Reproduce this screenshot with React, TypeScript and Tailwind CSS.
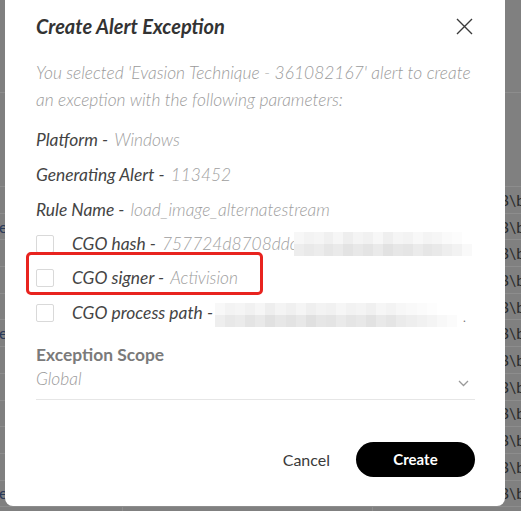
import React from "react";

const leftTexts: Record<number, string> = { 1: "e", 5: "e:", 11: "e:", 12: "exe" };

const hashBlocks = [
  ["bg-[#f7f7f7]", "bg-[#f3f3f3]", "bg-[#f5f5f5]", "bg-[#f0f0f0]", "bg-[#f6f6f6]", "bg-[#eeeeee]", "bg-[#f4f4f4]", "bg-[#f1f1f1]", "bg-[#f7f7f7]", "bg-[#efefef]", "bg-[#f5f5f5]", "bg-[#f3f3f3]", "bg-[#f8f8f8]", "bg-[#f4f4f4]", "bg-[#f6f6f6]", "bg-[#fafafa]", "bg-[#fcfcfc]", "bg-[#ffffff]"],
  ["bg-[#ededed]", "bg-[#e9e9e9]", "bg-[#ececec]", "bg-[#e6e6e6]", "bg-[#eaeaea]", "bg-[#e3e3e3]", "bg-[#e8e8e8]", "bg-[#e4e4e4]", "bg-[#eaeaea]", "bg-[#e2e2e2]", "bg-[#e7e7e7]", "bg-[#e5e5e5]", "bg-[#ebebeb]", "bg-[#e6e6e6]", "bg-[#e9e9e9]", "bg-[#eeeeee]", "bg-[#f2f2f2]", "bg-[#f9f9f9]"],
];

const pathBlocks = [
  ["bg-[#f8f8f8]", "bg-[#f3f3f3]", "bg-[#f5f5f5]", "bg-[#f1f1f1]", "bg-[#f6f6f6]", "bg-[#eeeeee]", "bg-[#f4f4f4]", "bg-[#f0f0f0]", "bg-[#f5f5f5]", "bg-[#efefef]", "bg-[#f3f3f3]", "bg-[#f1f1f1]", "bg-[#f6f6f6]", "bg-[#f2f2f2]", "bg-[#f4f4f4]", "bg-[#f0f0f0]", "bg-[#f6f6f6]", "bg-[#f3f3f3]", "bg-[#f7f7f7]", "bg-[#f9f9f9]", "bg-[#fbfbfb]", "bg-[#fdfdfd]", "bg-[#ffffff]", "bg-[#ffffff]"],
  ["bg-[#eeeeee]", "bg-[#e8e8e8]", "bg-[#ebebeb]", "bg-[#e4e4e4]", "bg-[#e9e9e9]", "bg-[#e1e1e1]", "bg-[#e7e7e7]", "bg-[#e3e3e3]", "bg-[#e8e8e8]", "bg-[#e0e0e0]", "bg-[#e6e6e6]", "bg-[#e4e4e4]", "bg-[#eaeaea]", "bg-[#e5e5e5]", "bg-[#e8e8e8]", "bg-[#e2e2e2]", "bg-[#e9e9e9]", "bg-[#e5e5e5]", "bg-[#ebebeb]", "bg-[#eeeeee]", "bg-[#f1f1f1]", "bg-[#f4f4f4]", "bg-[#f8f8f8]", "bg-[#fbfbfb]"],
];

function Blur({ blocks, width }: { blocks: string[][]; width: string }) {
  return (
    <div className={`flex flex-col shrink-0 ${width}`}>
      {blocks.map((row, i) => (
        <div key={i} className="flex h-[12px]">
          {row.map((c, j) => (
            <div key={j} className={`flex-1 ${c}`} />
          ))}
        </div>
      ))}
    </div>
  );
}

function Checkbox() {
  return <div className="w-[18px] h-[18px] border border-[#d9d9d9] rounded-[2px] bg-white shrink-0" />;
}

export default function App() {
  const rows = Array.from({ length: 13 }, (_, i) => i);
  return (
    <div className="relative w-[521px] h-[511px] overflow-hidden bg-[#808080] font-['Lato',sans-serif]">
      {/* background table */}
      <div className="flex flex-col text-[16px] text-[#2a2a2a]">
        <div className="h-[93px] border-b border-[#8d8d8d]" />
        <div className="h-[94px] border-b border-[#8d8d8d]" />
        {rows.map((i) => (
          <div key={i} className="flex h-[26.7px] border-b border-[#8d8d8d] items-center whitespace-nowrap overflow-hidden">
            <div className="w-[123px] h-full border-r border-[#8d8d8d] flex items-center overflow-hidden">
              <span className="-ml-[1px] text-[#2a3a5a]">{leftTexts[i] ?? ""}</span>
            </div>
            <div className="w-[250px] h-full border-r border-[#8d8d8d] flex items-center pl-[17px] overflow-hidden">
              "E:\IW8\game_iw8\bin\tools\c
            </div>
            <div className="flex-1 h-full flex items-center pl-[7px] overflow-hidden">
              E:\IW8\game_iw8\bin\tools
            </div>
          </div>
        ))}
      </div>

      {/* modal */}
      <div className="absolute left-[5px] top-0 w-[500px] h-[506px] bg-white rounded-b-[8px] pl-[31px] pr-[30px] flex flex-col">
        <div className="mt-[14px] h-[24px] flex items-center justify-between">
          <h2 className="text-[20px] font-bold italic text-[#333333] leading-[24px]">Create Alert Exception</h2>
          <svg width="17" height="17" viewBox="0 0 17 17" className="mr-[2px]">
            <path d="M1 1 L16 16 M16 1 L1 16" stroke="#3a3a3a" strokeWidth="1.4" fill="none" />
          </svg>
        </div>

        <p className="mt-[21px] text-[17.4px] leading-[27px] font-light italic text-[#9b9b9b]">
          You selected 'Evasion Technique - 361082167' alert to create an exception with the following parameters:
        </p>

        <div className="mt-[10px] flex flex-col text-[17.4px] italic whitespace-nowrap">
          <div className="h-[35px] flex items-center">
            <span className="text-[#444444]">Platform -</span>
            <span className="ml-[6px] font-light text-[#9e9e9e]">Windows</span>
          </div>
          <div className="h-[35px] flex items-center">
            <span className="text-[#444444]">Generating Alert -</span>
            <span className="ml-[6px] font-light text-[#9e9e9e]">113452</span>
          </div>
          <div className="h-[34px] flex items-center">
            <span className="text-[#444444]">Rule Name -</span>
            <span className="ml-[6px] font-light text-[#9e9e9e]">load_image_alternatestream</span>
          </div>
          <div className="h-[34px] flex items-center">
            <Checkbox />
            <span className="ml-[18px] text-[#444444]">CGO hash -</span>
            <span className="ml-[6px] font-light text-[#9e9e9e] w-[132px] overflow-hidden shrink-0">757724d8708ddc</span>
            <Blur blocks={hashBlocks} width="w-[178px]" />
          </div>
          <div className="h-[34px] flex items-center">
            <Checkbox />
            <span className="ml-[18px] text-[#444444]">CGO signer -</span>
            <span className="ml-[6px] font-light text-[#9e9e9e]">Activision</span>
          </div>
          <div className="h-[36px] flex items-center">
            <Checkbox />
            <span className="ml-[18px] text-[#444444]">CGO process path -</span>
            <div className="ml-[2px] mt-[4px]">
              <Blur blocks={pathBlocks} width="w-[242px]" />
            </div>
            <span className="ml-[6px] mt-[10px] text-[#777777] text-[12px] not-italic">.</span>
          </div>
        </div>

        <div className="mt-[12px] text-[17.4px] leading-[24px] font-bold text-[#7a7a7a]">Exception Scope</div>
        <div className="flex items-center justify-between pb-[8px] border-b border-[#e6e6e6]">
          <span className="text-[17.4px] leading-[24px] font-light italic text-[#9b9b9b]">Global</span>
          <svg width="11" height="7" viewBox="0 0 11 7" className="mr-[6px] mt-[8px]">
            <path d="M1 1 L5.5 5.5 L10 1" stroke="#9a9a9a" strokeWidth="1.3" fill="none" />
          </svg>
        </div>

        <div className="mt-auto mb-[29px] flex items-center justify-end">
          <button className="text-[16px] text-[#3a3a3a] leading-[20px]">Cancel</button>
          <button className="ml-[26px] w-[119px] h-[35px] rounded-full bg-black text-white text-[15px] font-bold">
            Create
          </button>
        </div>
      </div>

      {/* annotation */}
      <div className="absolute left-[26px] top-[252px] w-[237px] h-[43px] border-[3px] border-[#e8231f] rounded-[5px]" />
    </div>
  );
}
